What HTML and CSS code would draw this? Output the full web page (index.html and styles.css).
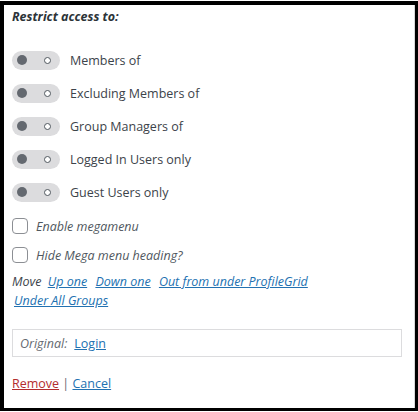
FILE: index.html
```html
<!DOCTYPE html>
<html>
<head>
<meta charset="utf-8">
<link rel="stylesheet" href="styles.css">
</head>
<body>
<div class="frame">
  <div class="panel">
    <h3 class="title">Restrict access to:</h3>
    <ul class="toggles">
      <li class="trow"><span class="toggle"><span class="knob"></span><span class="ring"></span></span><span class="tlabel">Members of</span></li>
      <li class="trow"><span class="toggle"><span class="knob"></span><span class="ring"></span></span><span class="tlabel">Excluding Members of</span></li>
      <li class="trow"><span class="toggle"><span class="knob"></span><span class="ring"></span></span><span class="tlabel">Group Managers of</span></li>
      <li class="trow"><span class="toggle"><span class="knob"></span><span class="ring"></span></span><span class="tlabel">Logged In Users only</span></li>
      <li class="trow"><span class="toggle"><span class="knob"></span><span class="ring"></span></span><span class="tlabel">Guest Users only</span></li>
    </ul>
    <div class="checks">
      <label class="crow"><span class="cbox"></span><span class="clabel">Enable megamenu</span></label>
      <label class="crow"><span class="cbox"></span><span class="clabel">Hide Mega menu heading?</span></label>
    </div>
    <p class="move">Move <a href="#">Up one</a> <a href="#">Down one</a> <a href="#">Out from under ProfileGrid</a> <a href="#">Under All Groups</a></p>
    <div class="original"><span class="olabel">Original:</span> <a href="#">Login</a></div>
    <div class="actions"><a href="#" class="remove">Remove</a> <span class="sep">|</span> <a href="#">Cancel</a></div>
  </div>
</div>
</body>
</html>
```

FILE: styles.css
```css
html, body {
  margin: 0;
  padding: 0;
  background: #ffffff;
}
body {
  font-family: "Open Sans", "Noto Sans", sans-serif;
  color: #3c434a;
}
.frame {
  margin-top: 1px;
  width: 418px;
  height: 410px;
  box-sizing: border-box;
  border-style: solid;
  border-color: #000;
  border-width: 4px 3px 3px 4px;
}
.panel {
  height: 100%;
  box-sizing: border-box;
  border-right: 1px solid #d8d8d8;
  padding: 2px 12px 0 8px;
}
.title {
  margin: 0;
  font-size: 12.5px;
  font-style: italic;
  font-weight: 700;
  color: #2c3338;
  line-height: 20px;
}
.toggles {
  list-style: none;
  margin: 23px 0 0 0;
  padding: 0;
  display: flex;
  flex-direction: column;
  gap: 13px;
}
.trow {
  display: flex;
  align-items: center;
  height: 20px;
}
.toggle {
  width: 48px;
  height: 19px;
  border-radius: 10px;
  background: #dcdcde;
  display: flex;
  align-items: center;
  justify-content: space-between;
  padding: 0 9px 0 5px;
  box-sizing: border-box;
}
.knob {
  width: 10px;
  height: 10px;
  border-radius: 50%;
  background: #646970;
}
.ring {
  width: 5px;
  height: 5px;
  border-radius: 50%;
  border: 1px solid #50575e;
  background: #fff;
}
.tlabel {
  margin-left: 10px;
  font-size: 12.5px;
  color: #3c434a;
}
.checks {
  margin-top: 16px;
  display: flex;
  flex-direction: column;
  gap: 13px;
}
.crow {
  display: flex;
  align-items: center;
  height: 16px;
}
.cbox {
  width: 16px;
  height: 16px;
  box-sizing: border-box;
  border: 1px solid #8c8f94;
  border-radius: 4px;
  background: #fff;
}
.clabel {
  margin-left: 8px;
  font-size: 12.5px;
  font-style: italic;
  color: #50575e;
}
.move {
  margin: 9px 0 0 0;
  font-size: 12.5px;
  font-style: italic;
  line-height: 19px;
  color: #3c434a;
  width: 320px;
}
.move a {
  margin-left: 5px;
}
.move a:first-child {
  margin-left: 3px;
}
.move a:last-child {
  margin-left: 2px;
}
a {
  color: #2271b1;
  text-decoration: underline;
}
.original {
  margin-top: 19px;
  border: 1px solid #dcdcde;
  height: 28px;
  box-sizing: border-box;
  display: flex;
  align-items: center;
  padding-left: 7px;
  font-size: 12.5px;
  width: 390px;
}
.olabel {
  font-style: italic;
  color: #646970;
  margin-right: 7px;
}
.actions {
  margin-top: 18px;
  font-size: 12.5px;
  color: #646970;
}
.actions .remove {
  color: #b32d2e;
}
```
